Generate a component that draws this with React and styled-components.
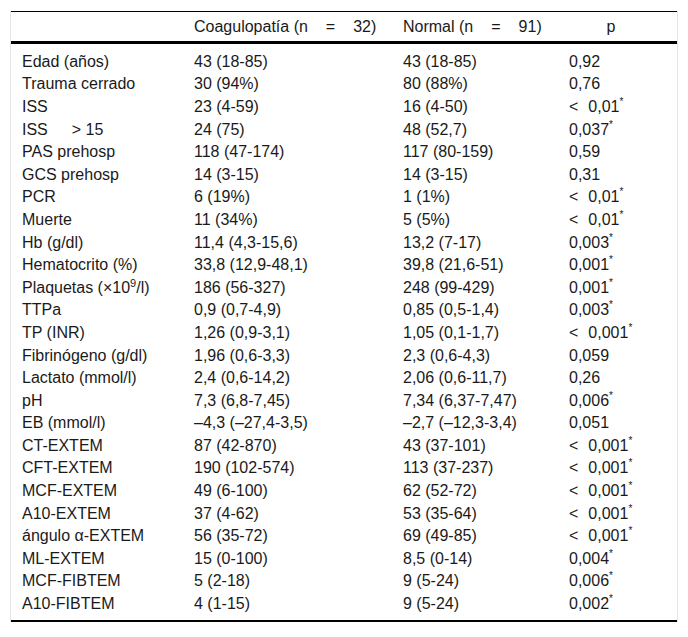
import React from "react";
import styled, { createGlobalStyle } from "styled-components";

const Global = createGlobalStyle`
  body {
    margin: 0;
    background: #fff;
    font-family: "Liberation Sans", Arial, sans-serif;
    color: #1a1a1a;
  }
  *, *::before, *::after { box-sizing: border-box; }
`;

const Frame = styled.div`
  margin: 11px 10px 0 10px;
  width: 668px;
  border-left: 1px solid #e4e4e4;
  border-right: 1px solid #e4e4e4;
`;

const Table = styled.table`
  width: 100%;
  table-layout: fixed;
  border-collapse: collapse;
  font-size: 16px;
  border-top: 1px solid #000;
  border-bottom: 2px solid #000;
`;

const HeadRow = styled.tr`
  border-bottom: 3px solid #000;
`;

const Th = styled.th`
  font-weight: normal;
  text-align: ${(p) => (p.center ? "center" : "left")};
  padding: ${(p) => (p.center ? "0 24px 0 11px" : "0 0 0 11px")};
  height: 31px;
  width: ${(p) => p.w || "auto"};
  white-space: nowrap;
`;

const Eq = styled.span`
  margin: 0 18px;
`;

const Td = styled.td`
  padding: 0 0 0 11px;
  height: 22.6px;
  line-height: 18px;
  white-space: nowrap;
`;

const Spacer = styled.tr`
  height: ${(p) => p.h}px;
`;

const Sup = styled.sup`
  font-size: ${(p) => (p.star ? "10px" : "11px")};
  vertical-align: ${(p) => (p.star ? "7px" : "6px")};
  line-height: 0;
`;

const Less = styled.span`
  margin-right: 10px;
`;

const Gap = styled.span`
  display: inline-block;
  width: ${(p) => p.w}px;
`;

const rows = [
  ["Edad (años)", "43 (18-85)", "43 (18-85)", "0,92"],
  ["Trauma cerrado", "30 (94%)", "80 (88%)", "0,76"],
  ["ISS", "23 (4-59)", "16 (4-50)", "<0,01*"],
  ["ISS>", "24 (75)", "48 (52,7)", "0,037*"],
  ["PAS prehosp", "118 (47-174)", "117 (80-159)", "0,59"],
  ["GCS prehosp", "14 (3-15)", "14 (3-15)", "0,31"],
  ["PCR", "6 (19%)", "1 (1%)", "<0,01*"],
  ["Muerte", "11 (34%)", "5 (5%)", "<0,01*"],
  ["Hb (g/dl)", "11,4 (4,3-15,6)", "13,2 (7-17)", "0,003*"],
  ["Hematocrito (%)", "33,8 (12,9-48,1)", "39,8 (21,6-51)", "0,001*"],
  ["PLAQ", "186 (56-327)", "248 (99-429)", "0,001*"],
  ["TTPa", "0,9 (0,7-4,9)", "0,85 (0,5-1,4)", "0,003*"],
  ["TP (INR)", "1,26 (0,9-3,1)", "1,05 (0,1-1,7)", "<0,001*"],
  ["Fibrinógeno (g/dl)", "1,96 (0,6-3,3)", "2,3 (0,6-4,3)", "0,059"],
  ["Lactato (mmol/l)", "2,4 (0,6-14,2)", "2,06 (0,6-11,7)", "0,26"],
  ["pH", "7,3 (6,8-7,45)", "7,34 (6,37-7,47)", "0,006*"],
  ["EB (mmol/l)", "\u20134,3 (\u201327,4-3,5)", "\u20132,7 (\u201312,3-3,4)", "0,051"],
  ["CT-EXTEM", "87 (42-870)", "43 (37-101)", "<0,001*"],
  ["CFT-EXTEM", "190 (102-574)", "113 (37-237)", "<0,001*"],
  ["MCF-EXTEM", "49 (6-100)", "62 (52-72)", "<0,001*"],
  ["A10-EXTEM", "37 (4-62)", "53 (35-64)", "<0,001*"],
  ["ángulo \u03b1-EXTEM", "56 (35-72)", "69 (49-85)", "<0,001*"],
  ["ML-EXTEM", "15 (0-100)", "8,5 (0-14)", "0,004*"],
  ["MCF-FIBTEM", "5 (2-18)", "9 (5-24)", "0,006*"],
  ["A10-FIBTEM", "4 (1-15)", "9 (5-24)", "0,002*"],
];

function Label({ text }) {
  if (text === "PLAQ") {
    return (
      <>
        Plaquetas (×10<Sup>9</Sup>/l)
      </>
    );
  }
  if (text === "ISS>") {
    return (
      <>
        ISS<Gap w={24} />&gt; 15
      </>
    );
  }
  return text;
}

function PValue({ text }) {
  let t = text;
  const less = t.startsWith("<");
  if (less) t = t.slice(1);
  const star = t.endsWith("*");
  if (star) t = t.slice(0, -1);
  return (
    <>
      {less && <Less>&lt;</Less>}
      {t}
      {star && <Sup star>*</Sup>}
    </>
  );
}

export default function App() {
  return (
    <>
      <Global />
      <Frame>
        <Table>
          <thead>
            <HeadRow>
              <Th w="172px"></Th>
              <Th w="209px">
                Coagulopatía (n<Eq>=</Eq>32)
              </Th>
              <Th w="166px">
                Normal (n<Eq>=</Eq>91)
              </Th>
              <Th center>p</Th>
            </HeadRow>
          </thead>
          <tbody>
            <Spacer h={8} />
            {rows.map((r, i) => (
              <tr key={i}>
                <Td>
                  <Label text={r[0]} />
                </Td>
                <Td>{r[1]}</Td>
                <Td>{r[2]}</Td>
                <Td>
                  <PValue text={r[3]} />
                </Td>
              </tr>
            ))}
            <Spacer h={6} />
          </tbody>
        </Table>
      </Frame>
    </>
  );
}
